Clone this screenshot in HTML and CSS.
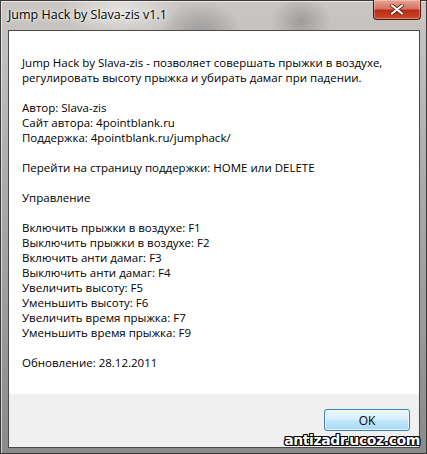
FILE: index.html
```html
<!DOCTYPE html>
<html lang="ru">
<head>
    <meta charset="UTF-8">
    <meta name="viewport" content="width=device-width, initial-scale=1.0">
    <title>Jump Hack by Slava-zis v1.1</title>
    <link rel="stylesheet" href="styles.css">
</head>
<body>
    <div class="window">
        <div class="titlebar">
            <span class="title">Jump Hack by Slava-zis v1.1</span>
            <div class="close-btn">
                <svg width="14" height="11" viewBox="0 0 14 11">
                    <path d="M2 1.5 L12 9.5 M12 1.5 L2 9.5" stroke="#5a1a10" stroke-width="3.6" stroke-linecap="round"/>
                    <path d="M2 1.5 L12 9.5 M12 1.5 L2 9.5" stroke="#fff" stroke-width="2.2" stroke-linecap="round"/>
                </svg>
            </div>
        </div>
        <div class="client">
            <div class="message">
                <p>Jump Hack by Slava-zis - позволяет совершать прыжки в воздухе,<br>регулировать высоту прыжка и убирать дамаг при падении.</p>
                <p>Автор: Slava-zis<br>Сайт автора: 4pointblank.ru<br>Поддержка: 4pointblank.ru/jumphack/</p>
                <p>Перейти на страницу поддержки: HOME или DELETE</p>
                <p>Управление</p>
                <p>Включить прыжки в воздухе: F1<br>Выключить прыжки в воздухе: F2<br>Включить анти дамаг: F3<br>Выключить анти дамаг: F4<br>Увеличить высоту: F5<br>Уменьшить высоту: F6<br>Увеличить время прыжка: F7<br>Уменьшить время прыжка: F9</p>
                <p>Обновление: 28.12.2011</p>
            </div>
            <div class="buttons">
                <button class="btn">OK</button>
            </div>
        </div>
        <div class="watermark">antizadr.ucoz.com</div>
    </div>
</body>
</html>
```

FILE: styles.css
```css
body {
    margin: 0;
    font-family: "Open Sans", "Noto Sans", sans-serif;
    font-size: 11.5px;
    overflow: hidden;
}
.window {
    position: relative;
    width: 427px;
    height: 454px;
    box-sizing: border-box;
    padding: 0 6px 5px 7px;
    display: flex;
    flex-direction: column;
    background:
        radial-gradient(ellipse 40px 30px at 200px 30px, rgba(120,120,120,0.5), transparent),
        radial-gradient(ellipse 30px 25px at 300px 20px, rgba(110,110,110,0.45), transparent),
        radial-gradient(ellipse 60px 30px at 120px 10px, rgba(255,255,255,0.5), transparent),
        linear-gradient(to bottom, #c9c6c3 0%, #aeaaa7 40%, #8c8a88 100%);
    border: 1px solid #3a3a3a;
    box-shadow: inset 1px 1px 0 rgba(255,255,255,0.6);
}
.titlebar {
    height: 29px;
    display: flex;
    justify-content: space-between;
    align-items: flex-start;
}
.title {
    margin-top: 5px;
    font-size: 12.5px;
    color: #000;
    text-shadow: 0 0 6px #fff, 0 0 3px #fff;
}
.close-btn {
    width: 46px;
    height: 19px;
    margin-top: -1px;
    margin-right: -1px;
    display: flex;
    align-items: center;
    justify-content: center;
    border: 1px solid #4a1c16;
    border-top: none;
    border-radius: 0 0 4px 4px;
    background: linear-gradient(to bottom, #e8a493 0%, #d47561 45%, #b92d14 55%, #cf4a2c 100%);
    box-shadow: inset 0 0 0 1px rgba(255,255,255,0.3);
}
.client {
    flex: 1;
    display: flex;
    flex-direction: column;
    border: 1px solid #4a4a4a;
    background: #fff;
}
.message {
    flex: 1;
    padding: 24px 12px 0 13px;
    line-height: 15px;
    color: #000;
}
.message p {
    margin: 0 0 15px 0;
}
.buttons {
    height: 53px;
    background: #f0f0f0;
    display: flex;
    justify-content: flex-end;
    padding: 15px 9px 0 0;
    box-sizing: border-box;
}
.btn {
    width: 86px;
    height: 22px;
    font-family: "Open Sans", "Noto Sans", sans-serif;
    font-size: 12px;
    color: #000;
    border: 1px solid #3c7fb1;
    border-radius: 3px;
    background: linear-gradient(to bottom, #eaf6fd 0%, #d9f0fc 45%, #bee6fd 55%, #a7d9f5 100%);
    box-shadow: inset 0 0 0 1px rgba(255,255,255,0.7);
    padding: 0;
}
.watermark {
    position: absolute;
    right: 6px;
    bottom: 5px;
    font-family: "DejaVu Sans", sans-serif;
    font-weight: bold;
    font-size: 14px;
    letter-spacing: -0.4px;
    color: #fff;
    text-shadow: 1px 0 0 #000, -1px 0 0 #000, 0 1px 0 #000, 0 -1px 0 #000,
        1px 1px 0 #000, -1px -1px 0 #000, 1px -1px 0 #000, -1px 1px 0 #000;
}
```
